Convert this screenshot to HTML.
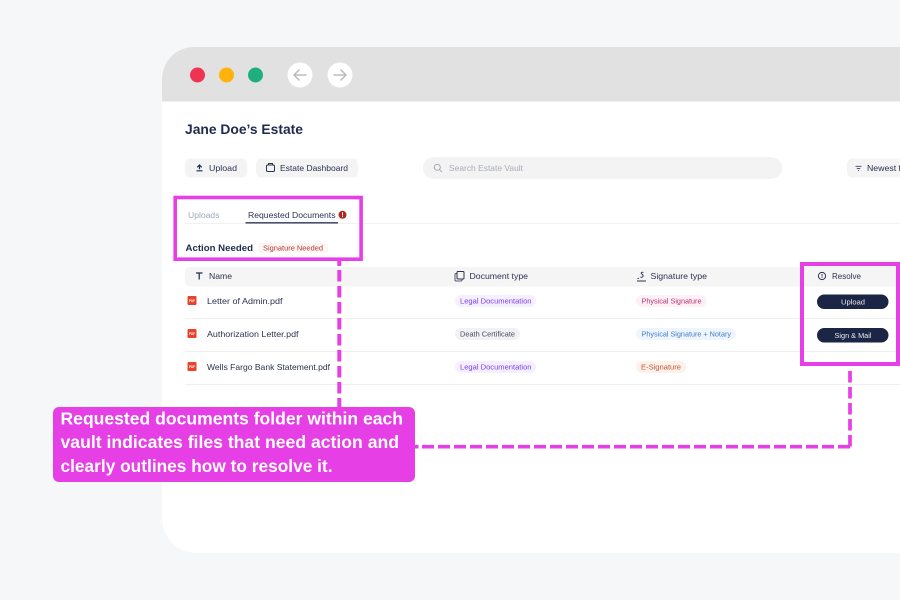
<!DOCTYPE html>
<html><head><meta charset="utf-8"><style>
html,body{margin:0;padding:0;width:900px;height:600px;overflow:hidden;background:#f6f7f9}
svg{display:block}
text{font-family:"Liberation Sans",sans-serif;fill:#2a3350;font-size:8.5px}
.soft{filter:blur(.3px)}
</style></head><body>
<svg width="900" height="600" viewBox="0 0 900 600" xmlns="http://www.w3.org/2000/svg">
<rect width="900" height="600" fill="#f6f7f9"/>
<path d="M900 47H194a32 32 0 0 0-32 32V518a35 35 0 0 0 35 35H900Z" fill="#fff"/>
<path d="M900 47H194a32 32 0 0 0-32 32V101.500H900Z" fill="#e1e1e1"/>
<g class="soft">
<circle cx="197.500" cy="75" r="7.500" fill="#ef3353"/>
<circle cx="226.500" cy="75" r="7.500" fill="#ffb30b"/>
<circle cx="255.500" cy="75" r="7.500" fill="#1fae7f"/>
<circle cx="300" cy="75" r="12.500" fill="#fff"/>
<circle cx="340" cy="75" r="12.500" fill="#fff"/>
<path d="M306.500 75H294.500M299.500 69.500l-5.500 5.500 5.500 5.500" fill="none" stroke="#bcbcbc" stroke-width="1.500"/>
<path d="M333.500 75H345.500M340.500 69.500l5.500 5.500-5.500 5.500" fill="none" stroke="#bcbcbc" stroke-width="1.500"/>

<text x="185" y="134" font-weight="700" style="font-size:14px;fill:#1f2a4d" textLength="118" lengthAdjust="spacingAndGlyphs">Jane Doe’s Estate</text>

<rect x="185" y="158.500" width="62" height="19" rx="5" fill="#f4f4f5"/>
<path d="M199.500 165.500v3.800M197.300 167.300l2.200-2.300 2.200 2.300M196.500 170.800h6" fill="none" stroke="#1f2a4d" stroke-width="1.200"/>
<text x="209" y="171" textLength="28" lengthAdjust="spacingAndGlyphs">Upload</text>
<rect x="256" y="158.500" width="102" height="19" rx="5" fill="#f4f4f5"/>
<rect x="266.500" y="165" width="8" height="6.500" rx="1.200" fill="none" stroke="#2a3350" stroke-width="1"/>
<path d="M268.500 165v-1.500h4V165" fill="none" stroke="#2a3350" stroke-width="1"/>
<text x="280" y="171" textLength="68" lengthAdjust="spacingAndGlyphs">Estate Dashboard</text>

<rect x="423" y="157" width="359" height="22" rx="11" fill="#f3f3f4"/>
<circle cx="437.300" cy="167.300" r="3" fill="none" stroke="#a4a8b3" stroke-width="1"/>
<path d="M439.500 169.500l2.500 2.500" stroke="#a4a8b3" stroke-width="1"/>
<text x="449" y="171" style="fill:#a9adb8" textLength="74" lengthAdjust="spacingAndGlyphs">Search Estate Vault</text>

<rect x="847" y="158.500" width="70" height="19" rx="5" fill="#f4f4f5"/>
<path d="M855.500 166.300h6M856.800 168.400h3.400M858 170.400h1" stroke="#3a4260" stroke-width=".9"/>
<text x="867" y="171" textLength="34" lengthAdjust="spacingAndGlyphs">Newest f</text>

<rect x="185" y="223" width="715" height="1" fill="#f1f1f2"/>
<text x="188" y="218" style="fill:#a0a8b8" textLength="31.500" lengthAdjust="spacingAndGlyphs">Uploads</text>
<text x="248" y="218" textLength="87.500" lengthAdjust="spacingAndGlyphs">Requested Documents</text>
<rect x="245.500" y="222" width="92.500" height="1.600" fill="#4a5270"/>
<circle cx="342.500" cy="214.800" r="4" fill="#a82a22"/>
<rect x="342" y="212.300" width="1" height="3.200" fill="#fff"/><rect x="342" y="216.200" width="1" height="1" fill="#fff"/>

<text x="185.500" y="251" font-weight="700" style="font-size:9.500px;fill:#1f2a4d" textLength="67.500" lengthAdjust="spacingAndGlyphs">Action Needed</text>
<rect x="258" y="243" width="70" height="9.500" rx="2.500" fill="#fdf5f1"/>
<text x="263" y="250.300" style="font-size:7px;fill:#b23a3a" textLength="60" lengthAdjust="spacingAndGlyphs">Signature Needed</text>

<path d="M900 267H190a5 5 0 0 0-5 5v9.500a5 5 0 0 0 5 5H900Z" fill="#f5f5f5"/>
<path d="M196 273h6.500M199.200 273v6.500" fill="none" stroke="#1f2a4d" stroke-width="1.200"/>
<text x="209" y="279" textLength="23" lengthAdjust="spacingAndGlyphs">Name</text>
<rect x="455" y="273.500" width="7" height="7.500" rx="1" fill="none" stroke="#555a6a" stroke-width="1"/>
<rect x="457" y="271.500" width="7" height="7.500" rx="1" fill="#f5f5f5" stroke="#2a3350" stroke-width="1"/>
<text x="469.500" y="279" textLength="58.500" lengthAdjust="spacingAndGlyphs">Document type</text>
<path d="M637 281h9" stroke="#2a3350" stroke-width="1"/>
<path d="M643.500 272.500c-2-.8-2.800.5-1.900 1.400s2 1.100 1.500 2.300-1.800 1.400-2.800.8M637.500 278.800l1.500-.8" fill="none" stroke="#2a3350" stroke-width=".9"/>
<text x="650.500" y="279" textLength="56.500" lengthAdjust="spacingAndGlyphs">Signature type</text>
<circle cx="822" cy="276" r="3.600" fill="none" stroke="#2a3350" stroke-width="1"/>
<rect x="821.600" y="274" width=".9" height="2.500" fill="#2a3350"/><rect x="821.600" y="277" width=".9" height=".9" fill="#2a3350"/>
<text x="832" y="279" textLength="29" lengthAdjust="spacingAndGlyphs">Resolve</text>

<rect x="185" y="318" width="715" height="1" fill="#efefef"/>
<rect x="185" y="351" width="715" height="1" fill="#efefef"/>
<rect x="185" y="384" width="715" height="1" fill="#efefef"/>

<rect x="187.500" y="296" width="9" height="9" rx="1" fill="#e8432e"/>
<text x="189" y="302" font-weight="700" style="font-size:3.500px;fill:#fff" textLength="6" lengthAdjust="spacingAndGlyphs">PDF</text>
<rect x="187.500" y="329" width="9" height="9" rx="1" fill="#e8432e"/>
<text x="189" y="335" font-weight="700" style="font-size:3.500px;fill:#fff" textLength="6" lengthAdjust="spacingAndGlyphs">PDF</text>
<rect x="187.500" y="362" width="9" height="9" rx="1" fill="#e8432e"/>
<text x="189" y="368" font-weight="700" style="font-size:3.500px;fill:#fff" textLength="6" lengthAdjust="spacingAndGlyphs">PDF</text>

<text x="207" y="304" textLength="75.500" lengthAdjust="spacingAndGlyphs">Letter of Admin.pdf</text>
<text x="207" y="337" textLength="91.500" lengthAdjust="spacingAndGlyphs">Authorization Letter.pdf</text>
<text x="207" y="370" textLength="123" lengthAdjust="spacingAndGlyphs">Wells Fargo Bank Statement.pdf</text>

<rect x="455" y="295" width="81" height="12" rx="6" fill="#f5f0ff"/>
<text x="460" y="303.500" style="font-size:7px;fill:#7c3aed" textLength="71.500" lengthAdjust="spacingAndGlyphs">Legal Documentation</text>
<rect x="455" y="328" width="65" height="12" rx="6" fill="#f1f2f5"/>
<text x="460" y="336.500" style="font-size:7px;fill:#4a4f60" textLength="55" lengthAdjust="spacingAndGlyphs">Death Certificate</text>
<rect x="455" y="361" width="81" height="12" rx="6" fill="#f5f0ff"/>
<text x="460" y="369.500" style="font-size:7px;fill:#7c3aed" textLength="71.500" lengthAdjust="spacingAndGlyphs">Legal Documentation</text>

<rect x="636" y="295" width="70.500" height="12" rx="6" fill="#fdf0f7"/>
<text x="641.500" y="303.500" style="font-size:7px;fill:#b8306f" textLength="60" lengthAdjust="spacingAndGlyphs">Physical Signature</text>
<rect x="636" y="328" width="100" height="12" rx="6" fill="#eff5fd"/>
<text x="641.500" y="336.500" style="font-size:7px;fill:#3f7fc8" textLength="89.500" lengthAdjust="spacingAndGlyphs">Physical Signature + Notary</text>
<rect x="636" y="361" width="50" height="12" rx="6" fill="#fdf1ea"/>
<text x="641" y="369.500" style="font-size:7px;fill:#c2573a" textLength="40" lengthAdjust="spacingAndGlyphs">E-Signature</text>

<rect x="817" y="294.500" width="71.500" height="14.500" rx="7.250" fill="#1b2545"/>
<text x="841" y="304.500" style="font-size:7px;fill:#e8e9ee" textLength="24" lengthAdjust="spacingAndGlyphs">Upload</text>
<rect x="817" y="328" width="71.500" height="14.500" rx="7.250" fill="#1b2545"/>
<text x="834.500" y="338" style="font-size:7px;fill:#e8e9ee" textLength="37" lengthAdjust="spacingAndGlyphs">Sign &amp; Mail</text>
</g>

<rect x="175.200" y="197.500" width="185.900" height="61.700" fill="none" stroke="#e63fe6" stroke-width="3.600"/>
<rect x="802" y="264" width="96" height="100" fill="none" stroke="#e63fe6" stroke-width="4"/>
<path d="M339.300 261V266M339.300 270V407" fill="none" stroke="#e63fe6" stroke-width="4" stroke-dasharray="11.500 4.500"/>
<path d="M415 446.700H418.500M422 446.700H852" fill="none" stroke="#e63fe6" stroke-width="3.700" stroke-dasharray="12 4"/>
<path d="M850 371V447" fill="none" stroke="#e63fe6" stroke-width="3.700" stroke-dasharray="11.500 4.500"/>

<rect x="53" y="407" width="362" height="75" rx="6" fill="#e63fe6"/>
<text x="60.500" y="424.300" style="font-size:17.500px;fill:#fff" font-weight="700" textLength="342.500" lengthAdjust="spacingAndGlyphs">Requested documents folder within each</text>
<text x="60.500" y="448" style="font-size:17.500px;fill:#fff" font-weight="700" textLength="338.500" lengthAdjust="spacingAndGlyphs">vault indicates files that need action and</text>
<text x="60.500" y="472" style="font-size:17.500px;fill:#fff" font-weight="700" textLength="272" lengthAdjust="spacingAndGlyphs">clearly outlines how to resolve it.</text>
</svg>
</body></html>
